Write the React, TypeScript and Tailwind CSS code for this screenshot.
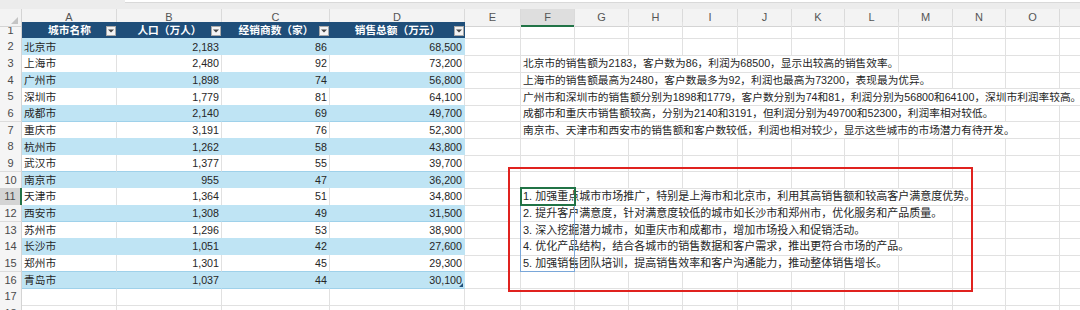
/** Excel 截图：城市销售数据表 + 分析文字 + 建议（红框标注） */

import clsx from 'clsx';

const GRID =
  'grid grid-cols-[22px_95px_105px_108px_135px_56px_54px_54px_54px_55px_54px_53px_54px_54px_53px_54px_54px]';

const LETTERS = ['A', 'B', 'C', 'D', 'E', 'F', 'G', 'H', 'I', 'J', 'K', 'L', 'M', 'N', 'O', 'P'];

const HEADERS = ['城市名称', '人口（万人）', '经销商数（家）', '销售总额（万元）'];

const DATA = [
  ['北京市', '2,183', '86', '68,500'],
  ['上海市', '2,480', '92', '73,200'],
  ['广州市', '1,898', '74', '56,800'],
  ['深圳市', '1,779', '81', '64,100'],
  ['成都市', '2,140', '69', '49,700'],
  ['重庆市', '3,191', '76', '52,300'],
  ['杭州市', '1,262', '58', '43,800'],
  ['武汉市', '1,377', '55', '39,700'],
  ['南京市', '955', '47', '36,200'],
  ['天津市', '1,364', '51', '34,800'],
  ['西安市', '1,308', '49', '31,500'],
  ['苏州市', '1,296', '53', '38,900'],
  ['长沙市', '1,051', '42', '27,600'],
  ['郑州市', '1,301', '45', '29,300'],
  ['青岛市', '1,037', '44', '30,100'],
];

// 行号 -> [占用列数(F 起), 文本]
const NOTES: Record<number, [number, string]> = {
  3: [7, '北京市的销售额为2183，客户数为86，利润为68500，显示出较高的销售效率。'],
  4: [8, '上海市的销售额最高为2480，客户数最多为92，利润也最高为73200，表现最为优异。'],
  5: [11, '广州市和深圳市的销售额分别为1898和1779，客户数分别为74和81，利润分别为56800和64100，深圳市利润率较高。'],
  6: [9, '成都市和重庆市销售额较高，分别为2140和3191，但利润分别为49700和52300，利润率相对较低。'],
  7: [10, '南京市、天津市和西安市的销售额和客户数较低，利润也相对较少，显示这些城市的市场潜力有待开发。'],
  11: [9, '1. 加强重点城市市场推广，特别是上海市和北京市，利用其高销售额和较高客户满意度优势。'],
  12: [8, '2. 提升客户满意度，针对满意度较低的城市如长沙市和郑州市，优化服务和产品质量。'],
  13: [7, '3. 深入挖掘潜力城市，如重庆市和成都市，增加市场投入和促销活动。'],
  14: [8, '4. 优化产品结构，结合各城市的销售数据和客户需求，推出更符合市场的产品。'],
  15: [7, '5. 加强销售团队培训，提高销售效率和客户沟通能力，推动整体销售增长。'],
};

const SPAN: Record<number, string> = {
  7: 'col-span-7',
  8: 'col-span-8',
  9: 'col-span-9',
  10: 'col-span-10',
  11: 'col-span-11',
};

const cell = 'h-full border-r border-b border-[#e1e1e1]';

/** 表头筛选按钮 */
function FilterButton() {
  return (
    <span className="absolute right-[1px] bottom-[2px] w-[10px] h-[10px] bg-[#f4f4f4] border border-[#a9a9a9] flex items-center justify-center">
      <svg width="6" height="4" viewBox="0 0 6 4">
        <path d="M0 0.5 L6 0.5 L3 3.5 Z" fill="#444" />
      </svg>
    </span>
  );
}

function RowHead({ n }: { n: number }) {
  const active = n === 11;
  return (
    <div
      className={clsx(
        'h-full flex items-center justify-center border-b border-[#dcdcdc] text-[11px] text-[#4a4a4a]',
        active ? 'bg-[#d4d4d4] border-r-2 border-r-[#217346]' : 'bg-[#f5f5f5] border-r border-r-[#d4d4d4]'
      )}
    >
      {n}
    </div>
  );
}

function Row({ n }: { n: number }) {
  const data = n >= 2 && n <= 16 ? DATA[n - 2] : null;
  const blue = n % 2 === 0;
  const note = NOTES[n];
  const rest = note ? 11 - note[0] : 0;

  return (
    <div className={clsx(GRID, 'h-[16.67px] shrink-0')}>
      <RowHead n={n} />

      {/* A–D：表格区 */}
      {n === 1 &&
        HEADERS.map((h) => (
          <div
            key={h}
            className="relative h-full bg-[#1f4e79] flex items-center justify-center font-bold text-white border-b border-[#1f4e79]"
          >
            {h}
            <FilterButton />
          </div>
        ))}
      {data &&
        data.map((v, i) => (
          <div
            key={i}
            className={clsx(
              'relative h-full flex items-center border-b border-b-[#9fd1ea] border-r',
              blue ? 'bg-[#bfe4f4] border-r-[#bfe4f4]' : 'bg-white border-r-[#e1e1e1]',
              i === 3 && 'border-r-[#9fd1ea]',
              i === 0 ? 'pl-[2px] justify-start' : 'pr-[2px] justify-end'
            )}
          >
            {v}
            {n === 16 && i === 3 && (
              <svg className="absolute right-[1px] bottom-[1px]" width="4" height="4" viewBox="0 0 4 4">
                <path d="M4 0 L4 4 L0 4 Z" fill="#1f4e79" />
              </svg>
            )}
          </div>
        ))}
      {n > 16 && [0, 1, 2, 3].map((i) => <div key={i} className={cell} />)}

      {/* E 列 */}
      <div className={cell} />

      {/* F 起：说明文字，溢出到右侧空单元格 */}
      {note ? (
        <>
          <div
            className={clsx(
              SPAN[note[0]],
              'h-full flex items-center pl-[2px] whitespace-nowrap border-b border-[#e1e1e1]',
              n >= 11 ? 'text-[11px]' : 'text-[10.7px]',
              note[0] < 11 && 'border-r'
            )}
          >
            {note[1]}
          </div>
          {Array.from({ length: rest }).map((_, i) => (
            <div key={i} className={cell} />
          ))}
        </>
      ) : (
        Array.from({ length: 11 }).map((_, i) => <div key={i} className={cell} />)
      )}
    </div>
  );
}

export default function App() {
  const rows = Array.from({ length: 18 }, (_, i) => i + 1);

  return (
    <div className="relative w-[1080px] h-[310px] overflow-hidden bg-white text-[10.7px] text-[#262626] font-['Liberation_Sans','Noto_Sans_CJK_SC',sans-serif]">
      {/* 顶部：编辑栏底边 */}
      <div className="h-[8.7px] bg-[#ececec] flex">
        <div className="w-[125px]" />
        <div className="flex-1 h-[3px] bg-white border-b border-[#d9d9d9]" />
      </div>

      {/* 列标 */}
      <div className={clsx(GRID, 'h-[13px]')}>
        <div className="relative h-full bg-[#f3f3f3] border-r border-b border-[#d4d4d4]">
          <svg className="absolute right-[3px] bottom-[2px]" width="7" height="7" viewBox="0 0 7 7">
            <path d="M7 0 L7 7 L0 7 Z" fill="#c4c4c4" />
          </svg>
        </div>
        {LETTERS.map((l) => (
          <div
            key={l}
            className={clsx(
              'h-full flex items-center justify-center text-[11px] text-[#555] border-r border-[#dadada]',
              l === 'F' ? 'bg-[#dedede] border-b-2 border-b-[#217346]' : 'bg-[#f3f3f3] border-b border-b-[#d4d4d4]'
            )}
          >
            {l}
          </div>
        ))}
      </div>

      {rows.map((n) => (
        <Row key={n} n={n} />
      ))}

      {/* F11:F15 引用区域 + 活动单元格 */}
      <div className="absolute left-[520px] top-[188.4px] w-[55px] h-[83.4px] border border-[#7aa7d9] pointer-events-none" />
      <div className="absolute left-[519.5px] top-[187.4px] w-[56px] h-[18.7px] border-2 border-[#217346] pointer-events-none" />

      {/* 红框标注 */}
      <div className="absolute left-[508px] top-[167px] w-[465px] h-[125px] border-2 border-[#e0221f] pointer-events-none" />
    </div>
  );
}
